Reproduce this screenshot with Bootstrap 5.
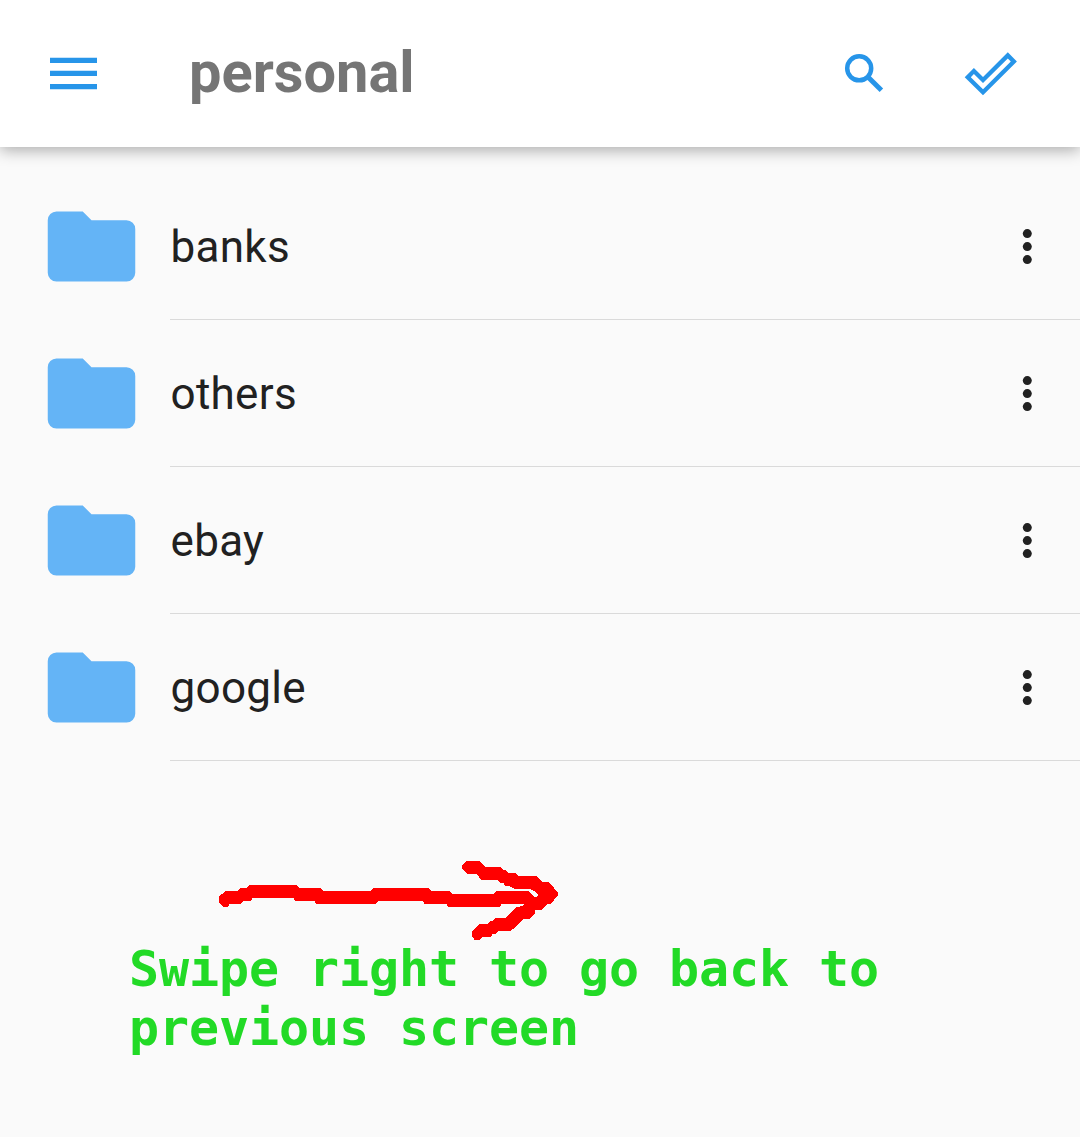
<!DOCTYPE html>
<html lang="en">
<head>
<meta charset="utf-8">
<meta name="viewport" content="width=device-width, initial-scale=1">
<title>personal</title>
<link href="https://cdn.jsdelivr.net/npm/bootstrap@5.3.0/dist/css/bootstrap.min.css" rel="stylesheet">
<style>
body { background: #fafafa; color: #212121; font-family: Roboto, sans-serif; }
svg { display: block; flex: none; }
.topbar { height: 147px; padding: 0 60px 2px 46px; background: #fff; color: #2795e9; box-shadow: 0 3px 15px rgba(0,0,0,.33); }
.topbar-title { margin-left: 87px; padding-bottom: 2px; font-size: 57.75px; line-height: 68px; color: #757575; }
.tool-icons { gap: 72px; }
.folders { padding-top: 26px; }
.folder-row { height: 147px; padding-left: 39px; }
.folder-icon { color: #64b4f6; }
.folder-body { margin-left: 26px; padding: 2px 40.7px 0 0; border-bottom: 1px solid #dadada; }
.folder-name { padding-left: .5px; font-size: 44px; line-height: 52px; letter-spacing: .3px; }
.hint { padding: 97px 130px 0 129px; }
.hint-arrow { margin-left: 81px; }
.hint-text { font: bold 50px/59px "DejaVu Sans Mono", monospace; letter-spacing: -.1px; color: #22da26; }
</style>
<script src="https://cdn.jsdelivr.net/npm/bootstrap@5.3.0/dist/js/bootstrap.bundle.min.js"></script>
</head>
<body class="overflow-hidden">
<header class="topbar d-flex align-items-center position-relative">
  <svg width="56" height="40" viewBox="46 53 56 40" fill="currentColor" role="img" aria-label="Menu"><path d="M50 57.7h47v5.3H50zM50 70.8h47v5.3H50zM50 84h47v5.2H50z"/></svg>
  <h1 class="topbar-title fw-bold mb-0">personal</h1>
  <div class="tool-icons d-flex ms-auto">
    <svg width="48" height="48" viewBox="840 49 48 48" fill="none" stroke="currentColor" role="img" aria-label="Search"><circle cx="859.2" cy="68.3" r="12" stroke-width="4.5"/><path d="M868.2 77.3l13.2 13" stroke-width="5"/></svg>
    <svg width="60" height="48" viewBox="960 49 60 48" fill="currentColor" fill-rule="evenodd" role="img" aria-label="Select all"><path d="M964.7 77.2l9.2-9.2 9.1 9.1 24.8-24.8 9.1 9.1L983 95.2zM970.8 77.2L983 89.2l27.8-27.8-3-3L983 83.1 973.9 74.1z"/></svg>
  </div>
</header>
<main>
  <div class="folders">
    <div class="folder-row d-flex">
      <svg class="folder-icon align-self-center" width="105" height="105" viewBox="0 0 24 24" fill="currentColor"><path d="M10 4H4a2 2 0 0 0-2 2v12a2 2 0 0 0 2 2h16a2 2 0 0 0 2-2V8a2 2 0 0 0-2-2h-8z"/></svg>
      <div class="folder-body d-flex flex-fill align-items-center justify-content-between"><span class="folder-name">banks</span><svg width="24" height="40" viewBox="0 0 24 40" fill="currentColor"><circle cx="12.3" cy="6.6" r="4.5"/><circle cx="12.3" cy="19.6" r="4.5"/><circle cx="12.3" cy="32.6" r="4.5"/></svg></div>
    </div>
    <div class="folder-row d-flex">
      <svg class="folder-icon align-self-center" width="105" height="105" viewBox="0 0 24 24" fill="currentColor"><path d="M10 4H4a2 2 0 0 0-2 2v12a2 2 0 0 0 2 2h16a2 2 0 0 0 2-2V8a2 2 0 0 0-2-2h-8z"/></svg>
      <div class="folder-body d-flex flex-fill align-items-center justify-content-between"><span class="folder-name">others</span><svg width="24" height="40" viewBox="0 0 24 40" fill="currentColor"><circle cx="12.3" cy="6.6" r="4.5"/><circle cx="12.3" cy="19.6" r="4.5"/><circle cx="12.3" cy="32.6" r="4.5"/></svg></div>
    </div>
    <div class="folder-row d-flex">
      <svg class="folder-icon align-self-center" width="105" height="105" viewBox="0 0 24 24" fill="currentColor"><path d="M10 4H4a2 2 0 0 0-2 2v12a2 2 0 0 0 2 2h16a2 2 0 0 0 2-2V8a2 2 0 0 0-2-2h-8z"/></svg>
      <div class="folder-body d-flex flex-fill align-items-center justify-content-between"><span class="folder-name">ebay</span><svg width="24" height="40" viewBox="0 0 24 40" fill="currentColor"><circle cx="12.3" cy="6.6" r="4.5"/><circle cx="12.3" cy="19.6" r="4.5"/><circle cx="12.3" cy="32.6" r="4.5"/></svg></div>
    </div>
    <div class="folder-row d-flex">
      <svg class="folder-icon align-self-center" width="105" height="105" viewBox="0 0 24 24" fill="currentColor"><path d="M10 4H4a2 2 0 0 0-2 2v12a2 2 0 0 0 2 2h16a2 2 0 0 0 2-2V8a2 2 0 0 0-2-2h-8z"/></svg>
      <div class="folder-body d-flex flex-fill align-items-center justify-content-between"><span class="folder-name">google</span><svg width="24" height="40" viewBox="0 0 24 40" fill="currentColor"><circle cx="12.3" cy="6.6" r="4.5"/><circle cx="12.3" cy="19.6" r="4.5"/><circle cx="12.3" cy="32.6" r="4.5"/></svg></div>
    </div>
  </div>
  <section class="hint">
    <!-- hand-drawn arrow -->
    <svg class="hint-arrow" width="360" height="82" viewBox="0 24 1080 246" fill="#f00" shape-rendering="crispEdges"><path d="M27 140L46 123H83L91 114H110L118 105H261L268 114H332L340 123H483L490 114H657L663 123H719L726 132H851L859 123H956L968 135 972 140H982L986 135 973 124 959 116H912L897 107H886L879 98H870L861 89H814L798 71H770L756 57V45L770 33H809L826 51H872L879 60H888L896 69H915L924 78H980L996 96H1017L1043 127V138L1022 161H1012L996 180H975V190L959 207H941L916 233 901 242H866L858 252H848L842 261H817L810 269H793L786 258V243L810 222H831L840 213H849L857 204H885L894 195 918 171 940 168 942 161H876L869 171H715L708 161H643L637 152H507L497 161H318L312 152H256L249 143H129L122 152H102L93 161H60L53 170H39L27 157Z"/></svg>
    <p class="hint-text mb-0">Swipe right to go back to<br>previous screen</p>
  </section>
</main>
</body>
</html>
